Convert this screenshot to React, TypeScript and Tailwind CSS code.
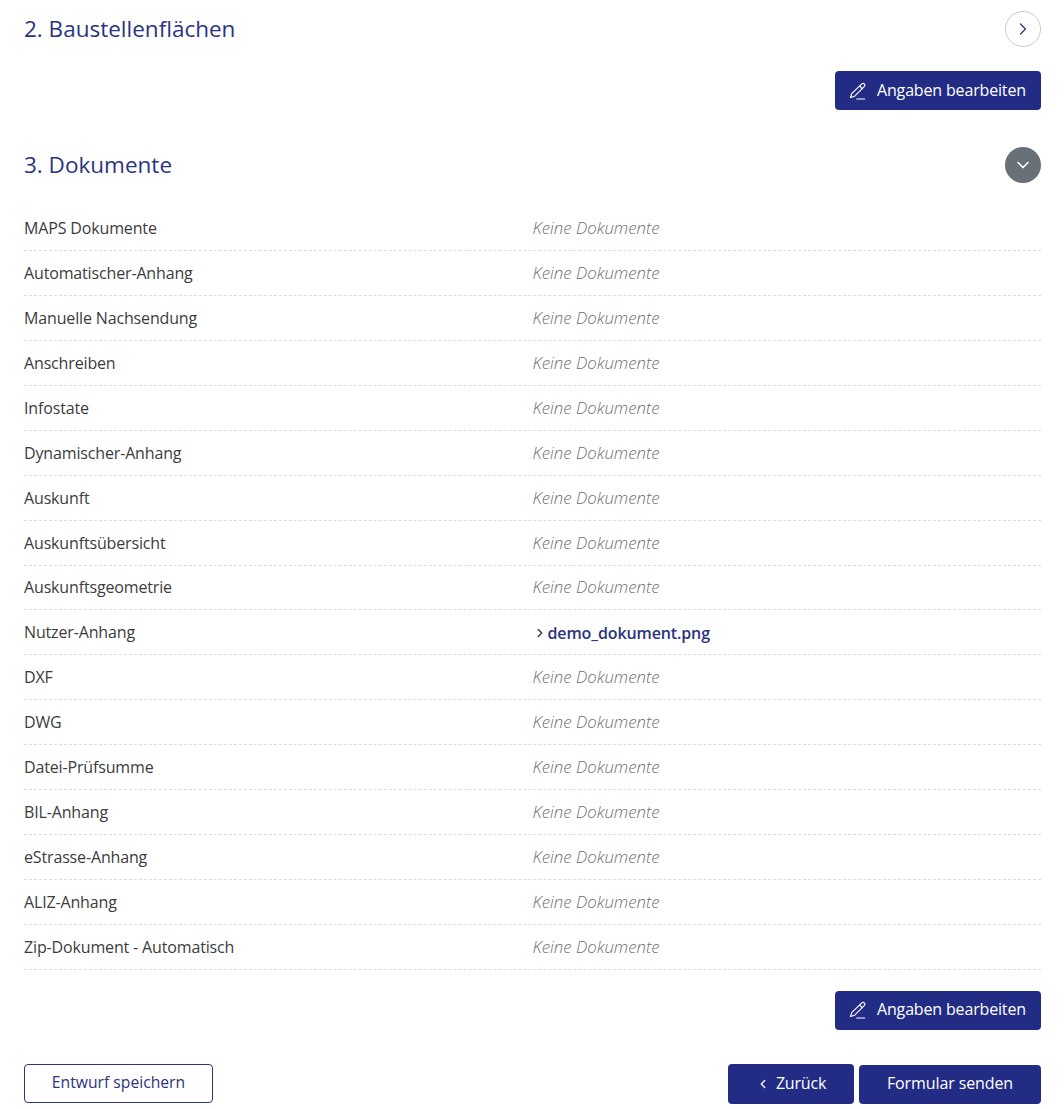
import React from 'react';
import { ChevronDown, ChevronLeft, ChevronRight } from 'lucide-react';

const documents = [
  'MAPS Dokumente',
  'Automatischer-Anhang',
  'Manuelle Nachsendung',
  'Anschreiben',
  'Infostate',
  'Dynamischer-Anhang',
  'Auskunft',
  'Auskunftsübersicht',
  'Auskunftsgeometrie',
  'Nutzer-Anhang',
  'DXF',
  'DWG',
  'Datei-Prüfsumme',
  'BIL-Anhang',
  'eStrasse-Anhang',
  'ALIZ-Anhang',
  'Zip-Dokument - Automatisch',
];

const PencilIcon: React.FC = () => (
  <svg viewBox="0 0 24 24" fill="none" stroke="currentColor" strokeWidth={1.35} strokeLinecap="round" strokeLinejoin="round" className="w-5 h-5 mr-2 mt-0.5 -ml-px">
    <path d="M16.6 3.4a2.2 2.2 0 0 1 3.1 3.1L8 18.2l-5 1.6 1.6-5Z" />
    <path d="M14 6l3.1 3.1" />
    <path d="M10.5 21.6h9.5" />
  </svg>
);

const EditButton: React.FC = () => (
  <div className="flex justify-end">
    <button className="flex items-center h-[39px] w-[206px] pl-[14px] pb-0.5 bg-[#222c84] text-white rounded text-base tracking-[-0.16px]">
      <PencilIcon />
      <span className="ml-px">Angaben bearbeiten</span>
    </button>
  </div>
);

const App: React.FC = () => {
  return (
    <div className="h-[1109px] overflow-hidden bg-white pl-6 pr-[23px] font-['Open_Sans',sans-serif] text-base text-[#3c3c3c]">
      <div className="flex items-center justify-between pt-[11px]">
        <h2 className="text-[22.5px] leading-9 text-[#2b3480]">2. Baustellenflächen</h2>
        <div className="flex items-center justify-center w-9 h-9 rounded-full border border-[#c9c9c9] text-[#2b3480]">
          <ChevronRight className="w-5 h-5" strokeWidth={1.5} />
        </div>
      </div>

      <div className="mt-6">
        <EditButton />
      </div>

      <div className="flex items-center justify-between mt-[37px]">
        <h2 className="text-[22.5px] leading-9 text-[#2b3480]">3. Dokumente</h2>
        <div className="flex items-center justify-center w-9 h-9 rounded-full bg-[#687078] text-white">
          <ChevronDown className="w-5 h-5" strokeWidth={2} />
        </div>
      </div>

      <div className="mt-[23px]">
        {documents.map(name => (
          <div key={name} className="grid grid-cols-2 gap-0 h-[44.94px] items-center border-b border-dashed border-[#dcdcdc]">
            <span className="leading-6 tracking-[-0.15px]">{name}</span>
            {name === 'Nutzer-Anhang' ? (
              <span className="flex items-center font-semibold text-[#2b3480] leading-6 pt-0.5 tracking-[-0.12px]">
                <ChevronRight className="w-[14px] h-[14px] mr-px text-[#3c3c3c]" strokeWidth={2.5} />
                demo_dokument.png
              </span>
            ) : (
              <span className="italic font-light text-[16.8px] text-[#6f6f6f] leading-6">Keine Dokumente</span>
            )}
          </div>
        ))}
      </div>

      <div className="mt-[21px]">
        <EditButton />
      </div>

      <div className="flex items-start justify-between mt-[34px]">
        <button className="w-[189px] h-[39px] pb-0.5 border border-[#2b3480] rounded text-[#2b3480] text-[15.7px]">
          Entwurf speichern
        </button>
        <div className="flex items-start gap-[5px]">
          <button className="flex items-center justify-center w-[126px] h-10 pb-0.5 bg-[#222c84] text-white rounded tracking-[-0.2px]">
            <ChevronLeft className="w-[14px] h-[14px] mr-[6px] mt-0.5" strokeWidth={2.25} />
            Zurück
          </button>
          <button className="w-[182px] h-[39px] mt-px pb-0.5 bg-[#222c84] text-white rounded tracking-[-0.1px]">Formular senden</button>
        </div>
      </div>
    </div>
  );
};

export default App;
